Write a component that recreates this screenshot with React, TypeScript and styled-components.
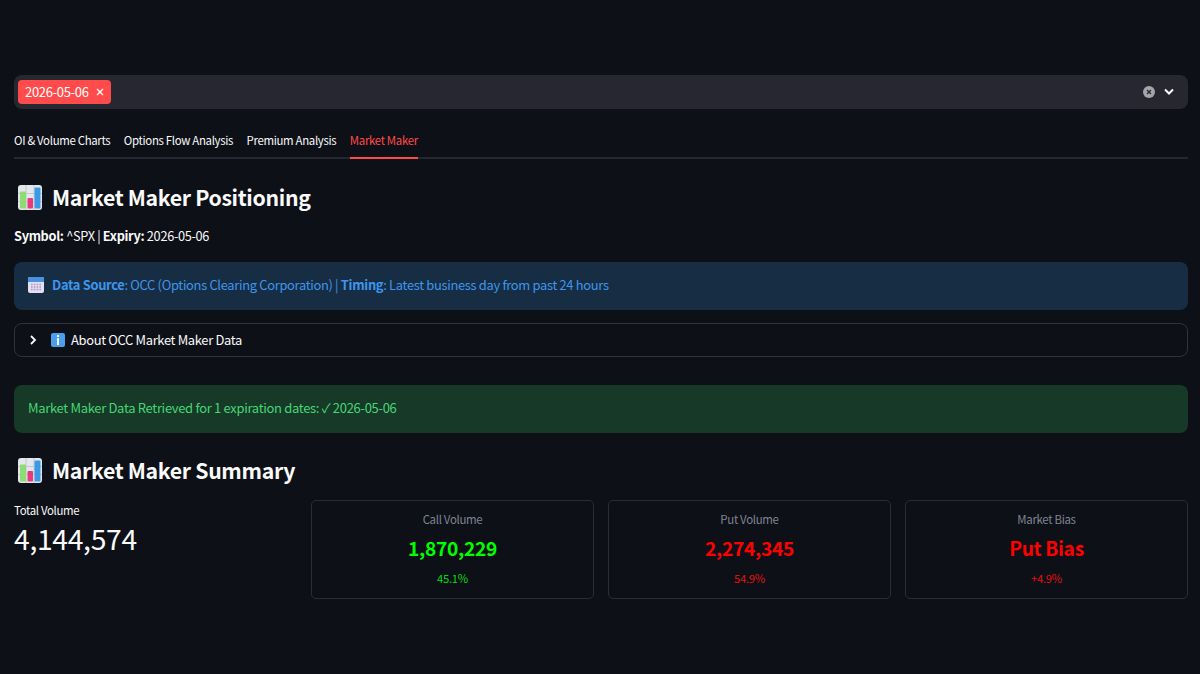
import React from "react";
import styled, { createGlobalStyle } from "styled-components";

const Global = createGlobalStyle`
  html, body { margin: 0; padding: 0; background: #0d1016; }
  body { font-family: "Noto Sans CJK SC", "Noto Sans", sans-serif; color: #fafafa; letter-spacing: -0.02em; }
  * { box-sizing: border-box; }
`;

const Page = styled.main`
  width: 1200px;
  height: 674px;
  overflow: hidden;
  padding: 75px 12px 0 14px;
  display: flex;
  flex-direction: column;
  background: #0d1016;
`;

const Select = styled.div`
  height: 34px;
  border-radius: 8px;
  background: #262730;
  display: flex;
  align-items: center;
  padding: 0 13px 0 4px;
`;

const Tag = styled.div`
  width: 93px;
  height: 24px;
  border-radius: 4px;
  background: #ff4b4b;
  color: #fff;
  font-size: 13px;
  white-space: nowrap;
  display: flex;
  align-items: center;
  justify-content: space-between;
  padding: 0 7px 1px;
`;

const SelectActions = styled.div`
  margin-left: auto;
  display: flex;
  align-items: center;
  gap: 8px;
`;

const Tabs = styled.nav`
  margin-top: 23px;
  height: 27px;
  display: flex;
  gap: 13.5px;
  border-bottom: 2px solid #262730;
`;

const Tab = styled.div<{ $active?: boolean }>`
  height: 27px;
  font-size: 11.42px;
  line-height: 16px;
  white-space: nowrap;
  color: ${(p) => (p.$active ? "#ff4b4b" : "#fafafa")};
  border-bottom: 2px solid ${(p) => (p.$active ? "#ff4b4b" : "transparent")};
`;

const Heading = styled.h2`
  margin: 21px 0 0;
  height: 34px;
  display: flex;
  align-items: center;
  gap: 10px;
  padding-left: 4px;
  font-size: 21.25px;
  line-height: 34px;
  font-weight: 600;
  color: #fafafa;
`;

const MetaLine = styled.p`
  margin: 12px 0 0;
  font-size: 12.75px;
  line-height: 19px;
  strong { font-weight: 600; }
`;

const Alert = styled.div<{ $tone: "info" | "success" }>`
  height: 48px;
  border-radius: 8px;
  padding: 0 14px 3px;
  display: flex;
  align-items: center;
  font-size: 12.92px;
  background: ${(p) => (p.$tone === "info" ? "#172d43" : "#173928")};
  color: ${(p) => (p.$tone === "info" ? "#3d96ee" : "#46d675")};
  strong { font-weight: 600; }
`;

const InfoAlert = styled(Alert)`
  margin-top: 17px;
  gap: 8px;
`;

const SuccessAlert = styled(Alert)`
  margin-top: 28px;
  font-size: 13px;
`;

const Expander = styled.div`
  margin-top: 13px;
  height: 34px;
  border: 1px solid #31333b;
  border-radius: 8px;
  display: flex;
  align-items: center;
  padding: 0 0 1px 14px;
  font-size: 12.92px;
  color: #fafafa;
`;

const ExpanderLabel = styled.span`
  margin-left: 14px;
  display: flex;
  align-items: center;
  gap: 6px;
`;

const SummaryHeading = styled(Heading)`
  margin-top: 20px;
`;

const Metrics = styled.section`
  margin-top: 13px;
  display: grid;
  grid-template-columns: 283px 283px 283px 283px;
  gap: 14px;
`;

const Metric = styled.div``;

const MetricLabel = styled.div`
  font-size: 11.4px;
  line-height: 20px;
`;

const MetricValue = styled.div`
  font-size: 28.3px;
  line-height: 36px;
`;

const Card = styled.div`
  height: 99px;
  border: 1px solid #2a2d35;
  border-radius: 5px;
  display: flex;
  flex-direction: column;
  align-items: center;
  text-align: center;
  padding-top: 9px;
`;

const CardLabel = styled.div`
  font-size: 11.45px;
  line-height: 18px;
  color: #808495;
`;

const CardValue = styled.div<{ $color: string }>`
  margin-top: 6px;
  font-size: 19.2px;
  line-height: 28px;
  font-weight: 700;
  color: ${(p) => p.$color};
`;

const CardSub = styled.div<{ $color: string }>`
  margin-top: 8px;
  font-size: 11.3px;
  line-height: 16px;
  color: ${(p) => p.$color};
`;

const ChartEmoji = () => (
  <svg width="24" height="25" viewBox="0 0 24 25" aria-hidden="true">
    <rect width="24" height="25" rx="3" fill="#e4e8ec" />
    <path d="M0 8.5h24M0 16.5h24M8 0v25M16 0v25" stroke="#b9bfc8" strokeWidth="0.8" />
    <rect x="2" y="6.5" width="6" height="17" rx="1" fill="#8fdc74" />
    <rect x="9.5" y="13" width="5.5" height="10.5" rx="1" fill="#e8397e" />
    <rect x="16.5" y="2.5" width="6" height="21" rx="1" fill="#3b9ae6" />
  </svg>
);

const CalendarEmoji = () => (
  <svg width="16" height="16" viewBox="0 0 16 16" aria-hidden="true">
    <rect width="16" height="16" rx="2" fill="#e6def2" />
    <path d="M0 2a2 2 0 0 1 2-2h12a2 2 0 0 1 2 2v3H0z" fill="#4a90e2" />
    <path d="M3 7.5h10M3 10h10M3 12.5h10" stroke="#a59bc4" strokeWidth="1.3" strokeDasharray="1.6 1.2" />
  </svg>
);

const InfoEmoji = () => (
  <svg width="14" height="14" viewBox="0 0 14 14" aria-hidden="true">
    <rect width="14" height="14" rx="2" fill="#4a9fee" />
    <rect x="6" y="2" width="2" height="2" fill="#fff" />
    <rect x="6" y="5.2" width="2" height="6.8" fill="#fff" />
  </svg>
);

const ClearIcon = () => (
  <svg width="12" height="12" viewBox="0 0 12 12" aria-hidden="true">
    <circle cx="6" cy="6" r="6" fill="#a5a5ab" />
    <path d="M4 4l4 4M8 4l-4 4" stroke="#262730" strokeWidth="1.3" />
  </svg>
);

const ChevronDown = () => (
  <svg width="12" height="8" viewBox="0 0 12 8" aria-hidden="true">
    <path d="M2 1.5l4 4 4-4" fill="none" stroke="#fafafa" strokeWidth="2" />
  </svg>
);

const ChevronRight = () => (
  <svg width="8" height="10" viewBox="0 0 8 10" aria-hidden="true">
    <path d="M2 1l4 4-4 4" fill="none" stroke="#fafafa" strokeWidth="1.8" />
  </svg>
);

const TagClose = () => (
  <svg width="8" height="8" viewBox="0 0 8 8" aria-hidden="true">
    <path d="M1 1l6 6M7 1l-6 6" stroke="#fff" strokeWidth="1.3" />
  </svg>
);

const tabs = ["OI & Volume Charts", "Options Flow Analysis", "Premium Analysis", "Market Maker"];
const cards = [
  { label: "Call Volume", value: "1,870,229", sub: "45.1%", color: "#00ff00", subColor: "#00dd10" },
  { label: "Put Volume", value: "2,274,345", sub: "54.9%", color: "#ff0000", subColor: "#e01010" },
  { label: "Market Bias", value: "Put Bias", sub: "+4.9%", color: "#ff0000", subColor: "#e01010" },
];

export default function App() {
  return (
    <Page>
      <Global />
      <Select>
        <Tag>
          2026-05-06
          <TagClose />
        </Tag>
        <SelectActions>
          <ClearIcon />
          <ChevronDown />
        </SelectActions>
      </Select>
      <Tabs>
        {tabs.map((t) => (
          <Tab key={t} $active={t === "Market Maker"}>{t}</Tab>
        ))}
      </Tabs>
      <Heading>
        <ChartEmoji />
        Market Maker Positioning
      </Heading>
      <MetaLine>
        <strong>Symbol:</strong> ^SPX | <strong>Expiry:</strong> 2026-05-06
      </MetaLine>
      <InfoAlert $tone="info">
        <CalendarEmoji />
        <span>
          <strong>Data Source</strong>: OCC (Options Clearing Corporation) | <strong>Timing</strong>: Latest business day from past 24 hours
        </span>
      </InfoAlert>
      <Expander>
        <ChevronRight />
        <ExpanderLabel>
          <InfoEmoji />
          About OCC Market Maker Data
        </ExpanderLabel>
      </Expander>
      <SuccessAlert $tone="success">Market Maker Data Retrieved for 1 expiration dates: ✓ 2026-05-06</SuccessAlert>
      <SummaryHeading>
        <ChartEmoji />
        Market Maker Summary
      </SummaryHeading>
      <Metrics>
        <Metric>
          <MetricLabel>Total Volume</MetricLabel>
          <MetricValue>4,144,574</MetricValue>
        </Metric>
        {cards.map((c) => (
          <Card key={c.label}>
            <CardLabel>{c.label}</CardLabel>
            <CardValue $color={c.color}>{c.value}</CardValue>
            <CardSub $color={c.subColor}>{c.sub}</CardSub>
          </Card>
        ))}
      </Metrics>
    </Page>
  );
}
